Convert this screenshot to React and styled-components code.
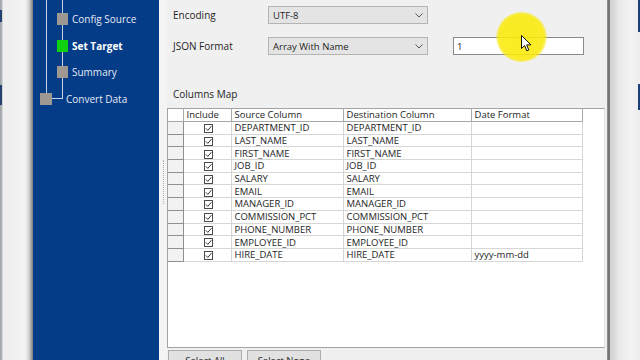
import React from 'react';
import styled, { createGlobalStyle } from 'styled-components';

const GlobalStyle = createGlobalStyle`
  html, body {
    margin: 0;
    padding: 0;
  }
  body {
    width: 640px;
    height: 360px;
    overflow: hidden;
    background: #f0f0f0;
    font-family: "Open Sans", "Noto Sans", sans-serif;
    font-size: 9.5px;
    color: #1e1e1e;
  }
`;

const LINE = '#c7d3e8';

const steps = [
    { label: 'Config Source', depth: 1, state: 'idle', outer: 'full', inner: 'full' },
    { label: 'Set Target', depth: 1, state: 'active', outer: 'full', inner: 'full' },
    { label: 'Summary', depth: 1, state: 'idle', outer: 'full', inner: 'full' },
    { label: 'Convert Data', depth: 0, state: 'idle', outer: 'toNode', inner: 'elbow' },
];

const columns = [
    ['DEPARTMENT_ID', 'DEPARTMENT_ID', ''],
    ['LAST_NAME', 'LAST_NAME', ''],
    ['FIRST_NAME', 'FIRST_NAME', ''],
    ['JOB_ID', 'JOB_ID', ''],
    ['SALARY', 'SALARY', ''],
    ['EMAIL', 'EMAIL', ''],
    ['MANAGER_ID', 'MANAGER_ID', ''],
    ['COMMISSION_PCT', 'COMMISSION_PCT', ''],
    ['PHONE_NUMBER', 'PHONE_NUMBER', ''],
    ['EMPLOYEE_ID', 'EMPLOYEE_ID', ''],
    ['HIRE_DATE', 'HIRE_DATE', 'yyyy-mm-dd'],
];

// connector lines of the wizard tree, drawn as row backgrounds
const rowLines = ({ $outer, $inner }) => {
    const g = `linear-gradient(${LINE}, ${LINE})`;
    const layers = [];
    if ($outer === 'full') layers.push(`${g} 13px 0 / 1px 100%`);
    if ($outer === 'toNode') layers.push(`${g} 13px 0 / 1px 30%`);
    if ($inner === 'full') layers.push(`${g} 29px 0 / 1px 100%`);
    if ($inner === 'elbow') {
        layers.push(`${g} 29px 0 / 1px 50%`);
        layers.push(`${g} 19px 50% / 11px 1px`);
    }
    return layers.length ? layers.join(', ') : 'none';
};

function Chevron() {
    return (
        <svg width="8" height="5" viewBox="0 0 8 5">
            <path d="M0.5 0.5 L4 4 L7.5 0.5" fill="none" stroke="#555" strokeWidth="1" />
        </svg>
    );
}

function CheckBox() {
    return (
        <Check>
            <svg width="7" height="7" viewBox="0 0 7 7">
                <path d="M0.8 3.4 L2.8 5.4 L6.4 1.2" fill="none" stroke="#333" strokeWidth="1" />
            </svg>
        </Check>
    );
}

function Pointer() {
    return (
        <Cursor width="11" height="17" viewBox="0 0 11 17">
            <path d="M0.5 0.5 L0.5 13.5 L3.6 10.6 L5.8 15.8 L7.8 15 L5.7 9.9 L10 9.9 Z"
                fill="#fff" stroke="#111" strokeWidth="1" strokeLinejoin="round" />
        </Cursor>
    );
}

export default function App() {
    return (
        <>
            <GlobalStyle />
            <Screen>
                <LeftEdge />
                <Sidebar>
                    <TreeRow $h={5.75} $outer="full" $inner="full" />
                    {steps.map(s => (
                        <TreeRow key={s.label} $depth={s.depth} $outer={s.outer} $inner={s.inner}>
                            <Node $depth={s.depth} $active={s.state === 'active'} />
                            <StepLabel $depth={s.depth} $active={s.state === 'active'}>{s.label}</StepLabel>
                        </TreeRow>
                    ))}
                </Sidebar>
                <Splitter><Grip /></Splitter>
                <Content>
                    <FormRow $top={6}>
                        <FieldLabel>Encoding</FieldLabel>
                        <Combo><span>UTF-8</span><Chevron /></Combo>
                    </FormRow>
                    <FormRow $top={13}>
                        <FieldLabel>JSON Format</FieldLabel>
                        <Combo><span>Array With Name</span><Chevron /></Combo>
                        <TextBox>1</TextBox>
                    </FormRow>
                    <SectionLabel>Columns Map</SectionLabel>
                    <GridBox>
                        <Grid>
                            <colgroup>
                                <col style={{ width: 15 }} />
                                <col style={{ width: 48 }} />
                                <col style={{ width: 112 }} />
                                <col style={{ width: 128 }} />
                                <col style={{ width: 111 }} />
                            </colgroup>
                            <thead>
                                <tr>
                                    <HeadCell />
                                    <HeadCell>Include</HeadCell>
                                    <HeadCell>Source Column</HeadCell>
                                    <HeadCell>Destination Column</HeadCell>
                                    <HeadCell>Date Format</HeadCell>
                                </tr>
                            </thead>
                            <tbody>
                                {columns.map(([src, dst, fmt]) => (
                                    <tr key={src}>
                                        <RowHead />
                                        <Cell $center><CheckBox /></Cell>
                                        <Cell>{src}</Cell>
                                        <Cell>{dst}</Cell>
                                        <Cell>{fmt}</Cell>
                                    </tr>
                                ))}
                            </tbody>
                        </Grid>
                    </GridBox>
                    <ButtonBar>
                        <Button>Select All</Button>
                        <Button>Select None</Button>
                    </ButtonBar>
                </Content>
                <Divider />
                <RightEdge />
                <Highlight />
                <Pointer />
            </Screen>
        </>
    );
}

const Screen = styled.div`
    position: relative;
    display: flex;
    width: 640px;
    height: 360px;
    overflow: hidden;
`;

const LeftEdge = styled.div`
    flex: none;
    width: 33px;
    background:
        linear-gradient(#24406e, #24406e) 0 10px / 2px 12px no-repeat,
        linear-gradient(#24406e, #24406e) 0 85px / 2px 20px no-repeat,
        linear-gradient(90deg, #9a9ea6 0, #b9bbbf 2px, #eeeeee 3px, #f3f3f3 25px, #d4d4d4 29px, #8e8e8e 32px, #7d7d7d 33px);
`;

const Sidebar = styled.div`
    flex: none;
    width: 126px;
    background: #043c87;
    display: flex;
    flex-direction: column;
`;

const TreeRow = styled.div`
    flex: none;
    display: flex;
    align-items: center;
    height: ${p => p.$h || 26.5}px;
    padding-left: ${p => (p.$depth ? 24 : 7)}px;
    background: ${rowLines};
    background-repeat: no-repeat;
`;

const Node = styled.span`
    flex: none;
    width: ${p => (p.$depth ? 11 : 12)}px;
    height: ${p => (p.$depth ? 12 : 12)}px;
    background: ${p => (p.$active ? '#0fd10f' : '#9e9792')};
`;

const StepLabel = styled.span`
    margin-left: ${p => (p.$depth ? 4 : 14)}px;
    color: ${p => (p.$active ? '#ffffff' : '#e4eaf4')};
    font-weight: ${p => (p.$active ? 700 : 400)};
    font-size: 10px;
    white-space: nowrap;
`;

const Splitter = styled.div`
    flex: none;
    width: 8px;
    background: #f4f4f4;
    display: flex;
    align-items: center;
    justify-content: center;
`;

const Grip = styled.div`
    width: 0;
    height: 44px;
    margin-top: 4px;
    border-left: 1px dotted #a7aeb8;
`;

const Content = styled.div`
    flex: none;
    width: 440px;
    display: flex;
    flex-direction: column;
    background: #f0f0f0;
`;

const FormRow = styled.div`
    display: flex;
    align-items: center;
    height: 18px;
    margin-top: ${p => p.$top}px;
    padding-left: 6px;
`;

const FieldLabel = styled.span`
    width: 95px;
    flex: none;
    font-size: 10px;
`;

const Combo = styled.div`
    box-sizing: border-box;
    width: 160px;
    height: 18px;
    display: flex;
    align-items: center;
    justify-content: space-between;
    padding: 0 4px 0 4px;
    background: #e4e4e4;
    border: 1px solid #b4b4b4;
    font-size: 9.5px;
`;

const TextBox = styled.div`
    box-sizing: border-box;
    width: 131px;
    height: 18px;
    margin-left: 25px;
    display: flex;
    align-items: center;
    padding-left: 3px;
    background: #ffffff;
    border: 1px solid #8a8a8a;
    font-size: 9.5px;
`;

const SectionLabel = styled.div`
    height: 12px;
    line-height: 12px;
    margin-top: 33px;
    padding-left: 6px;
    font-size: 10px;
`;

const GridBox = styled.div`
    box-sizing: border-box;
    flex: none;
    width: 438px;
    height: 240px;
    margin-top: 8px;
    background: #ffffff;
    border: 1px solid #a3a3a3;
    border-right-color: #e2e2e2;
`;

const Grid = styled.table`
    border-collapse: collapse;
    table-layout: fixed;
    width: 414px;
`;

const HeadCell = styled.th`
    height: 12px;
    padding: 0 0 0 3px;
    text-align: left;
    font-weight: 400;
    font-size: 9.5px;
    line-height: 12px;
    white-space: nowrap;
    overflow: hidden;
    background: #ffffff;
    border-right: 1px solid #a8a8a8;
    border-bottom: 1px solid #a8a8a8;
`;

const RowHead = styled.td`
    height: 11.7px;
    padding: 0;
    background: #f2f2f2;
    border-right: 1px solid #8f8f8f;
    border-bottom: 1px solid #8f8f8f;
`;

const Cell = styled.td`
    height: 11.7px;
    padding: 0 0 0 3px;
    font-size: 9.5px;
    line-height: 11px;
    white-space: nowrap;
    overflow: hidden;
    text-align: ${p => (p.$center ? 'center' : 'left')};
    border-right: 1px solid #d6d6d6;
    border-bottom: 1px solid #d6d6d6;
`;

const Check = styled.span`
    box-sizing: border-box;
    display: inline-flex;
    align-items: center;
    justify-content: center;
    width: 9px;
    height: 9px;
    vertical-align: middle;
    border: 1px solid #4a4a4a;
    background: #ffffff;
`;

const ButtonBar = styled.div`
    display: flex;
    gap: 5px;
    margin-top: 2px;
    padding-left: 1px;
`;

const Button = styled.div`
    box-sizing: border-box;
    width: 74px;
    height: 20px;
    display: flex;
    align-items: center;
    justify-content: center;
    background: #e1e1e1;
    border: 1px solid #adadad;
    font-size: 9.5px;
`;

const Divider = styled.div`
    flex: none;
    width: 3px;
    background: linear-gradient(90deg, #9a9a9a, #6b6b6b 60%, #8a8a8a);
`;

const RightEdge = styled.div`
    flex: 1;
    background:
        linear-gradient(#1d3f78, #1d3f78) right 0 top 0 / 2px 32px no-repeat,
        linear-gradient(#1d3f78, #1d3f78) right 0 top 84px / 2px 26px no-repeat,
        linear-gradient(90deg, #cfcfcf, #e9e9e9 30%, #f3f3f3 70%, #ededed);
`;

const Highlight = styled.div`
    position: absolute;
    left: 496px;
    top: 12px;
    width: 51px;
    height: 50px;
    border-radius: 50%;
    background: radial-gradient(circle, rgba(250, 234, 10, 0.9) 0, rgba(250, 234, 10, 0.88) 62%, rgba(250, 234, 10, 0.55) 69%, rgba(250, 234, 10, 0) 72%);
`;

const Cursor = styled.svg`
    position: absolute;
    left: 521px;
    top: 35px;
`;
